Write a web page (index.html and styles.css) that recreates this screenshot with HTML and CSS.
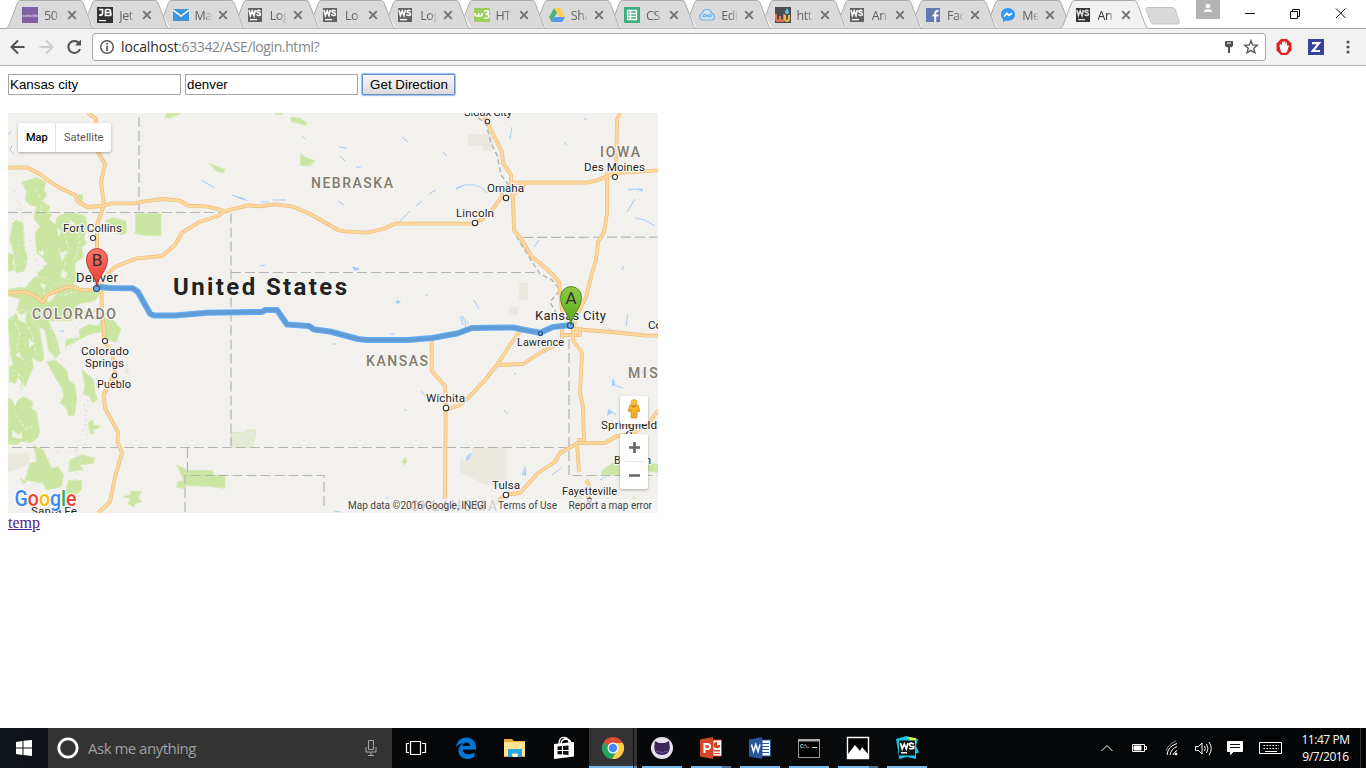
FILE: index.html
```html
<!DOCTYPE html>
<html lang="en">
<head>
<meta charset="utf-8">
<title>Directions</title>
<link rel="stylesheet" href="styles.css">
</head>
<body>
<svg class="defs" width="0" height="0" aria-hidden="true">
  <symbol id="tab" viewBox="0 0 90 29"><path d="M0 28.5C2 28 2.600 26 3.500 24L11 4C12 1.500 12.500.5 15 .5H73.500C76 .5 76.500 1.500 77.500 4L85 24C86 26.500 86.500 28 88.500 28.500"/></symbol>
  <symbol id="x" viewBox="0 0 10 10"><path d="M1.200 1.200L8.800 8.800M8.800 1.200L1.200 8.800" stroke="#737373" stroke-width="1.900"/></symbol>
  <symbol id="ws" viewBox="0 0 16 16"><path fill="#626262" d="M0 1h14v14H0z"/><path fill="none" stroke="#fff" stroke-width="1.600" d="M1 3l1.400 5.500L4.200 4l1.800 4.500L7.300 3M12.600 4.300C11.300 2.900 8.800 3 9 4.700c.2 1.500 3.500.8 3.500 2.500 0 1.700-2.800 1.600-4 .3"/><path fill="#fff" d="M2 12h7v1.300H2z"/></symbol>
</svg>

<header class="browser">
  <div class="tabstrip">
    <div class="tab"><svg class="shape"><use href="#tab"/></svg><svg class="fav" viewBox="0 0 16 16"><path fill="#7f60a5" d="M0 0h16v16H0z"/><text x="0.500" y="9.500" class="tiny" textLength="15">colorlib</text></svg><span>50</span><svg class="close"><use href="#x"/></svg></div>
    <div class="tab"><svg class="shape"><use href="#tab"/></svg><svg class="fav" viewBox="0 0 16 16"><path fill="#333" d="M0 0h16v16H0z"/><path fill="none" stroke="#fff" stroke-width="1.700" d="M2 2.500h3.500v4Q5.500 8.500 2 8M8.500 2.500v6H12q2 0 2-1.500t-2-1.500H8.500M8.500 2.500H12q1.500 0 1.500 1.500T12 5.500"/><path fill="#fff" d="M2 13h7v1.200H2z"/></svg><span>Jet</span><svg class="close"><use href="#x"/></svg></div>
    <div class="tab"><svg class="shape"><use href="#tab"/></svg><svg class="fav" viewBox="0 0 16 16"><path fill="#3d94d9" d="M0 2h16v12H0z"/><path d="M0 3l8 6 8-6" fill="none" stroke="#fff" stroke-width="1.500"/></svg><span>Ma</span><svg class="close"><use href="#x"/></svg></div>
    <div class="tab"><svg class="shape"><use href="#tab"/></svg><svg class="fav"><use href="#ws"/></svg><span>Log</span><svg class="close"><use href="#x"/></svg></div>
    <div class="tab"><svg class="shape"><use href="#tab"/></svg><svg class="fav"><use href="#ws"/></svg><span>Lo</span><svg class="close"><use href="#x"/></svg></div>
    <div class="tab"><svg class="shape"><use href="#tab"/></svg><svg class="fav"><use href="#ws"/></svg><span>Log</span><svg class="close"><use href="#x"/></svg></div>
    <div class="tab"><svg class="shape"><use href="#tab"/></svg><svg class="fav" viewBox="0 0 16 16"><rect width="16" height="14" y="1" rx="1" fill="#9dce5c"/><path d="M1 6v1.500Q1 9 2.800 9T4.600 7.500V6v1.500Q4.600 9 6.400 9T8.200 7.500V6M10 4q4.500-1 4.500 1t-3 2q3.500 0 3.500 2.300T10 11" fill="none" stroke="#fff" stroke-width="1.500"/></svg><span>HT</span><svg class="close"><use href="#x"/></svg></div>
    <div class="tab"><svg class="shape"><use href="#tab"/></svg><svg class="fav" viewBox="0 0 16 16"><path fill="#48b281" d="M5.300 1L0 10l2.700 5L8 5.700z"/><path fill="#ffd04b" d="M5.300 1H11l5 9h-5.400z"/><path fill="#5a95f2" d="M5.300 10H16l-2.800 5H2.600z"/></svg><span>Sha</span><svg class="close"><use href="#x"/></svg></div>
    <div class="tab"><svg class="shape"><use href="#tab"/></svg><svg class="fav" viewBox="0 0 16 16"><rect width="16" height="16" rx="1" fill="#39ae78"/><path fill="none" stroke="#fff" stroke-width="1.300" d="M3.500 3.500h9v9h-9zM3.500 6.500h9M3.500 9.500h9M6.500 3.500v9"/></svg><span>CS</span><svg class="close"><use href="#x"/></svg></div>
    <div class="tab"><svg class="shape"><use href="#tab"/></svg><svg class="fav" viewBox="0 0 16 16"><path d="M3 13Q.7 12 .7 9.500T3.200 6.500Q4 2.500 8 2.500T12.500 6Q15.300 7 15.300 10T12.500 13z" fill="#d5e5f3" stroke="#6bb1ee" stroke-width="1.200"/><path d="M8 9q-3-3-4-.5T8 9q3-3 4-.5T8 9" fill="none" stroke="#6bb1ee" stroke-width="1.200"/></svg><span>Edi</span><svg class="close"><use href="#x"/></svg></div>
    <div class="tab"><svg class="shape"><use href="#tab"/></svg><svg class="fav" viewBox="0 0 16 16"><path fill="#4a4d50" d="M0 0h16v16H0z"/><path d="M1 7v4q0 3 2 3t2-3V9v2q0 3 2 3t2-3V7" fill="none" stroke="#ee7550" stroke-width="2"/><path d="M10 8v3q0 3 2 3t2-3V8" fill="none" stroke="#f2bc48" stroke-width="2"/><path fill="#67bde0" d="M12 1q4 6 0 6T12 1z"/></svg><span>htt</span><svg class="close"><use href="#x"/></svg></div>
    <div class="tab"><svg class="shape"><use href="#tab"/></svg><svg class="fav"><use href="#ws"/></svg><span>An</span><svg class="close"><use href="#x"/></svg></div>
    <div class="tab"><svg class="shape"><use href="#tab"/></svg><svg class="fav" viewBox="0 0 16 16"><path fill="#6479b2" d="M1 1h14v14H1z"/><path d="M13.500 4h-1q-2.300 0-2.300 2.500V15M7.500 8.500h6" fill="none" stroke="#fff" stroke-width="2"/></svg><span>Fac</span><svg class="close"><use href="#x"/></svg></div>
    <div class="tab"><svg class="shape"><use href="#tab"/></svg><svg class="fav" viewBox="0 0 16 16"><path fill="#3298f6" d="M8 1C3.500 1 1 4 1 7.500c0 2 .8 3.500 2 4.500v3l3-1.500C11 14.500 15 12 15 7.500 15 4 12 1 8 1z"/><path d="M4 9.500L7 6.300l2 2 3-2" fill="none" stroke="#fff" stroke-width="1.800"/></svg><span>Me</span><svg class="close"><use href="#x"/></svg></div>
    <div class="tab active"><svg class="shape"><use href="#tab"/></svg><svg class="fav"><use href="#ws"/></svg><span>An</span><svg class="close"><use href="#x"/></svg></div>
    <svg class="newtab" width="36" height="18" viewBox="0 0 36 18"><path d="M2 .5h25.500q2 0 2.700 2l4 12q.8 2-1.200 2.500H8.500q-2 0-2.700-2L1 2.500Q.5.500 2 .5z"/></svg>
    <div class="profile"><svg width="24" height="19" viewBox="0 0 24 19"><circle cx="12" cy="6" r="2.300" fill="#fff"/><path fill="#fff" d="M8 12q0-3 4-3t4 3z"/></svg></div>
    <svg class="winctl" width="120" height="28" viewBox="0 0 120 28"><path d="M1 13.500h10M46.500 11.500h7v7h-7zM48.500 11.500v-2h7v7h-2M92 8.500l9.500 9.500M101.500 8.500L92 18"/></svg>
  </div>
  <div class="toolbar">
    <svg class="nav" width="84" height="36" viewBox="0 0 84 36"><path d="M24.500 18H12M18 11.500L11.500 18l6.500 6.500" stroke="#505050"/><path d="M39.500 18H52M46 11.500l6.500 6.500-6.500 6.500" stroke="#ccc"/><path d="M79.300 14.500A6 6 0 1 0 80 20" stroke="#505050"/><path d="M81 10.500v6h-6z" fill="#505050"/></svg>
    <div class="omnibox">
      <svg width="16" height="16" viewBox="0 0 16 16"><circle cx="8" cy="8" r="6.300" fill="none" stroke="#555" stroke-width="1.400"/><path fill="#555" d="M7.200 4h1.700v1.700H7.200zM7.200 7h1.700v5H7.200z"/></svg>
      <span class="url"><b>localhost</b>:63342/ASE/login.html?</span>
      <svg class="key" width="10" height="14" viewBox="0 0 10 14"><path fill="#555" d="M1 1h8v5L7.500 7.200H6V13H4V7.200H2.500L1 6z"/><path fill="#fff" d="M3 2.500h4v1H3z"/></svg>
      <svg class="star" width="16" height="16" viewBox="0 0 16 16"><path fill="none" stroke="#555" stroke-width="1.400" d="M8 1.700l1.700 4.200 4.600.4-3.500 3 1.100 4.500L8 11.400l-3.900 2.400 1.100-4.500-3.500-3 4.600-.4z"/></svg>
    </div>
    <svg class="hand" width="16" height="16" viewBox="0 0 16 16"><path fill="#e22222" d="M5 0h6l4.500 4.500v7L11 16H5L.5 11.500v-7z"/><path fill="#fff" d="M3.500 6.500L5 4.500l1 2.500V2.700h1.300V6.500l.5-4.300h1.300v4.300l.6-3.300h1.200v4.300l1-1.500 1.100.7-2 6q-.7 1.300-3.200 1.300-2.800 0-3.300-2.500z"/></svg>
    <svg class="zed" width="16" height="16" viewBox="0 0 16 16"><path fill="#38419b" d="M0 0h16v16H0z"/><path d="M4 4.200h7L4.800 12H12" fill="none" stroke="#fff" stroke-width="2.200"/></svg>
    <svg class="dots" width="4" height="16" viewBox="0 0 4 16"><circle cx="2" cy="3" r="1.600"/><circle cx="2" cy="8" r="1.600"/><circle cx="2" cy="13" r="1.600"/></svg>
  </div>
</header>

<main class="page">
  <form class="route">
    <input class="field" type="text" value="Kansas city"><input class="field" type="text" value="denver"><button class="go" type="button">Get Direction</button>
  </form>
  <section class="map">
    <svg class="canvas" width="650" height="400" viewBox="8 113 650 400">
      <path fill="#f2f1ee" d="M8 113h650v400H8z"/>
      <!-- Parks and forest, in tile units of a third of a pixel -->
      <g class="green" transform="translate(0 110) scale(.33333)">
        <path d="M65 215L85 210 110 203 125 210 138 215 132 240 140 255 128 275 150 290 145 305 155 315 147 325 165 345 172 320 200 308 225 308 258 320 260 350 252 385 260 400 245 410 250 440 225 460 225 485 235 500 220 520 235 530 200 545 150 540 145 520 120 510 112 490 130 475 142 460 125 440 110 430 105 370 120 350 102 325 110 290 90 285 75 270 80 245z"/>
        <path d="M38 340l10-10 22 10 2 70 10 35-8 38-27 5-6-60-12-40zM24 430l20 5-6 25 6 20-20 5zM75 535l30-35 35 5 20 20 30-10 60 25 40-10 10 20-15 22-50 10-20 50H95l-10-25-35-5 10-35-35-10v-20l40-5zM225 265l5-10 17-2 2 27-20-5zM315 332l25-9 38 10 2 35-15 7-28-12zM407 310h76v67h-40l-38-6zM500 10h45l-30 12-20 3zM627 160l48 18-3 10-20-2z"/>
      </g>
      <g class="green" transform="translate(0 310) scale(.33333)">
        <path d="M24 30l35-30 30 0 5 25 20 15 8 35 10 70-8 10-16-4-13-10 5 30-25 60-15 15 5-30-12-15-7 20-18-5v-46l12-5-8-30-4-50zM24 265l25 10 20-15 30 15-5 20 15 10 5 28 5 30-5 20-20 15-30-5-10 10H24zM90 25l45-15 20 45 15 30 10 45-12 15-23-25-10-60-30-15zM140 155l25-5 35 30 5 30 20 15 5 45-7 45-17 3-5-20-20-20 10-20-5-25-20-30zM195 110l5-22 40-5-2-25 30-15 30 5 10-45h-35l-40 10-25-10h70l25-10v30l35 5 25 30-15 40-30-12-15-20-30 5z"/>
        <path d="M245 178l35 30 5 40 8 20-15 10-10-20-18-5 5-25zM265 340l12-12 5 18h20l-8 10-15 2 3 15-12-5zM100 405l30 15 25 55 20-5 15 25-5 35-45 10-10-20-55-10 15-50 20-5zM210 450l35-15 40 10-5 15-40 5 10 15-45 5zM205 510l40 2v25l-25 25-25-10zM60 505l20 10-10 8zM370 560l20-5 3-12 32 3-10 15 10 15-20 5-2 10-18-8 4-18zM530 465l28 12v4h80v14h37v40l-50-6-65-3-5 10-25-4 3-15 18-5-10-25z"/>
      </g>
      <g class="green" transform="translate(230 110) scale(.33333)"><path d="M183 22l25 2 23 15-3 8-20-7-25-5zM211 132l12 8 32 12-15 15h-28zM135 9h25l-5 5h-20z"/><path fill="#e4ead6" d="M3 967h42l3-7h28v15l-8 37H3z"/></g>
      <g class="green" transform="translate(450 310) scale(.33333)"><path d="M455 482l35-25 134 5v25l-50-7-60 15h-60z"/><path fill="#e3e9d4" d="M385 548l10 12-8 20-15-20zM550 560l30 20-35 10z"/></g>
      <g class="green" transform="translate(230 310) scale(.33333)"><path d="M526 440l6 15-10 10-6-10z"/></g>
      <g fill="#eae8df"><path d="M468 134h25v17h-10v-5h-15zM519 283h9v17h-9zM509 307h9v8h-9zM473 447h34v42l-23-5-24-12v-13h10zM8 454l20-2 2 12-22 8zM124 369h5v5h-3z"/></g>
      <g fill="#f5f5f1" opacity=".85"><path d="M22 275l8 6-7 4zM15 310l7 5 5-4-2 12-6-3zM58 245l3 8 6-3-5 12zM70 220l5 3-4 9zM15 355l5-3 2 7zM12 430l7 5 3-4v8l-10-2zM43 292l13 3-7 8zM22 384l4 4-6 4zM62 270l6 3-3 6-4-2zM40 283l6 2-2 5zM57 228l4 3-2 6zM12 398l5 3-2 6zM29 338l5 6-5 4zM38 252l6-2-1 6z"/></g>
      <path class="ridge" d="M12 318l8 14-3 16 8 16M26 322l6 12 5 24M14 370l10 10-2 14M50 290l12 6 14-5M62 225l6 22-4 22 6 16M76 225l4 16-5 18M16 415l10 14 10-4M20 202l3 24 3 24M36 190l6 12-2 14"/>
      <path class="ridge pale" d="M50 328l8 22-5 8 14 3M88 400l-3 25-5 14-10 30M84 404l3 30-10 40M76 450l5 18-9 20 10 11M14 190l5 15-8 20 9 15-5 20 7 12M57 355l20-14M30 240l8 24 14 6M16 255l14 10M40 465l20-15 14 4M62 312l16 18-8 20"/>
      <!-- Rivers and lakes -->
      <g class="water"><path d="M201 180l14 8M232 195l8 3M302 136l3 3M339 147l8 1M340 156l5 5M356 167h5M338 201l6 4M402 137l6 5M443 152l4 4M400 221l10-10M416 206l6-5M429 194l7-4M456 189l5-2M261 202h8M273 200h13M12 145l-2 5 4 4M8 135l3-4M95 119l3 4M512 127l-2 12M564 142l3 3M584 119h3M456 188q20-9 31 5M635 199l-8 13M628 190l7-1 6 1M635 218l10 2 10 6M539 240l-5 7M624 266l-2 4M474 300l5 9M462 316l7 8M628 314l-2 12M609 328l2 3M641 370l6 10M614 385l9 3M608 409l8 6M630 364l2 14M460 317l3 8M390 334h5M332 344h4M504 410l4 4M514 373l2 1M421 391l4 5M404 410h3M466 457l5-4-3 7M525 467l-3 8M552 475l9-7M600 480l6-3M386 497l3 4M334 511l6 1M60 331h4M260 266l5-1M353 267l6 3M425 295h3M461 316l4 6 1 8"/><path class="lake" d="M232 195l12 3 4 3-5-1zM352 267l8 1-5 3zM395 302l3-2 3 2-3 2zM466 458l6-4-5 7zM608 410l5 2-6 4zM523 475l3-8v9zM638 188l5 1-1 3zM612 380l2-1 1 6-3 1z"/></g>
      <!-- State borders -->
      <g class="border"><path d="M139 117v95M8 212.500h223V446M231 272.500h307M12 447.500h558M187.500 448v28M185 512v-36.500h139V510M569 339v136.500h88M523 237.500l135-.5"/><path class="river" d="M478 118l8 5 5 20 6 12 4 20 7 9 4 14 1 25 5 16 13 21 9 14 12 6 8 10-10 12 8 14"/></g>
      <!-- Highways -->
      <defs><g id="roads">
        <path d="M8 167.700L26.700 167.300 40 174.300 50 181.700 60 188 75 195 78 201.700 87 207 103 206 112 203.300H135L142 201.700 163 199 180 200.700 188 205.700 208 206.700 225 211 240 207.300 247 205.300 260 206.300 275 204.300 293 206.700 310 214 338 230 345 231.300 367 232.700 383 229 395 223.700H472L483 219 492 210 501 198 503 190"/>
        <path d="M88 113L96 119 98 152 105 164 101 182 104 205 97 225V285L101.500 292 102 315 104.500 330 103.500 340 112 353 115 373 103.500 395 105 408 118 432 117.500 442 122 453 115 477 110 502 98 513"/>
        <path d="M225 211L218 216 200 221.700 182 232.700 175 245 162 256 137 258.300 115 266.700 105 277 100 288 88 290H82L68 286.700 55 291.700 47 295 43 302 37 297 25 291.700 8 293"/>
        <path d="M482 113L487 122 494 136 502 152 503 163 511 175V182L513 198 514 230 523 242 532 257 540 263 553 275 559 282 562 310 571 325M511 182.500L587 182.700 597 180.300 610 175 623 172.700 658 170.300M510 198L525 184M620 113L617 120 616 173H607V213L604 232 598 242 596 260 592 273 586 297 578 313 574 325"/>
        <path d="M573 325V340L582 353 580 393 583 407 584 440 577 440M577 443L579 472M431.700 339V371L445 386 445.700 407 445 500M446 410L460 405 468 398 485 380 497 365 508 348 520 331M497 365L523 364 540 353 562 341 562 328M562 335H580V327M573 329L617 332.500 647 335.700H658M490 507L506 494.500 520 493 538 473 555 462 560 453 578 443H605L617 436 630 435 650 422 658 410M586 480L589 485 588 510"/>
      </g>
      <path id="drive" d="M97 286.700L110 288 133 288.300 138 292 150 313.500 154 315.500H175L207 312.700 262 312 265 310H277L287 324.500 309 326 314 329.500 330 331.500 358 339 367 340H408L432 338 457 333.500 472 328 513 327.500 525 330 540 332.700 553 327 571 325"/></defs>
      <use href="#roads" class="casing"/><use href="#roads" class="road"/>
      <use href="#drive" class="drive-edge"/><use href="#drive" class="drive-mid"/>
      <g class="stop"><circle cx="487.500" cy="121.500" r="2.200"/><circle cx="506" cy="198" r="2.700"/><circle cx="475" cy="223" r="2.700"/><circle cx="615" cy="177" r="2.500"/><circle cx="93" cy="238" r="2.500"/><circle cx="105" cy="341" r="2.500"/><circle cx="114.500" cy="375.500" r="2.200"/><circle cx="446" cy="408" r="2.800"/><circle cx="506" cy="495" r="2.700"/><circle cx="589.500" cy="500" r="2"/><circle cx="629" cy="434" r="2.500"/></g>
      <g class="stop blue"><circle cx="96.500" cy="288.500" r="3"/><circle cx="570.500" cy="325.500" r="3"/><circle cx="540.500" cy="333.500" r="2"/></g>
      <g class="state"><text x="311" y="188" textLength="82">NEBRASKA</text><text x="600" y="157" textLength="40">IOWA</text><text x="32" y="319" textLength="84">COLORADO</text><text x="366" y="366" textLength="62">KANSAS</text><text x="628" y="378" textLength="82">MISSOURI</text><text x="410" y="511" textLength="87">OKLAHOMA</text></g>
      <text class="country" x="173" y="294.500" textLength="174">United States</text>
      <g class="city"><text x="464" y="116" textLength="48">Sioux City</text><text x="487" y="192" textLength="37">Omaha</text><text x="456" y="217" textLength="38">Lincoln</text><text x="584" y="171" textLength="61">Des Moines</text><text x="63" y="232" textLength="59">Fort Collins</text><text class="big" x="76" y="281.500" textLength="42">Denver</text><text x="81" y="355" textLength="48">Colorado</text><text x="85" y="367" textLength="39">Springs</text><text class="small" x="97" y="388" textLength="34">Pueblo</text><text x="426" y="402" textLength="39">Wichita</text><text class="big" x="535" y="320" textLength="71">Kansas City</text><text class="small" x="517" y="346" textLength="47">Lawrence</text><text x="648" y="329">Columbia</text><text x="601" y="429" textLength="56">Springfield</text><text class="small" x="614" y="464" textLength="37">Branson</text><text x="492" y="489" textLength="28">Tulsa</text><text class="small" x="562" y="495" textLength="55">Fayetteville</text><text x="31" y="515" textLength="46">Santa Fe</text></g>
      <defs>
        <linearGradient id="red" x1="0" y1="0" x2="0" y2="1"><stop stop-color="#fc7467"/><stop offset="1" stop-color="#e83b32"/></linearGradient>
        <linearGradient id="grn" x1="0" y1="0" x2="0" y2="1"><stop stop-color="#8bcb42"/><stop offset="1" stop-color="#5ca623"/></linearGradient>
      </defs>
      <path fill="url(#red)" stroke="#a52a25" stroke-width=".8" d="M97 287C96 276 86.500 271 86.500 259a10.500 10.500 0 0 1 21 0C107.500 271 98 276 97 287z"/>
      <path fill="url(#grn)" stroke="#43791d" stroke-width=".8" d="M571 325C570 314 560.500 309 560.500 297a10.500 10.500 0 0 1 21 0C581.500 309 572 314 571 325z"/>
      <g class="pin"><text x="97" y="265.500">B</text><text x="571" y="304">A</text></g>
      <text class="logo" x="14.500" y="505.500" textLength="62" lengthAdjust="spacingAndGlyphs"><tspan fill="#4285f4">G</tspan><tspan fill="#ea4335">o</tspan><tspan fill="#fbbc05">o</tspan><tspan fill="#4285f4">g</tspan><tspan fill="#34a853">l</tspan><tspan fill="#ea4335">e</tspan></text>
    </svg>
    <div class="maptype"><b>Map</b><span>Satellite</span></div>
    <div class="pegman"><svg width="14" height="20" viewBox="0 0 14 20"><path fill="#f7b62b" stroke="#c9861b" stroke-width=".7" d="M3 6h8l2 6-1.700 1L10 10.500V19H7.500v-5h-1v5H4v-8.500L2.700 13 1 12z"/><circle cx="7" cy="3.500" r="3" fill="#fbc23a" stroke="#d2901c" stroke-width=".7"/><path fill="#e0761c" d="M4 6.500h6L7 9z"/></svg></div>
    <div class="zoom"><svg width="28" height="55" viewBox="0 0 28 55"><path fill="none" stroke="#666" stroke-width="2.600" d="M9 13.500h11M14.500 8v11M9 41.500h11"/><path stroke="#e6e6e6" d="M5 27.500h18"/></svg></div>
    <div class="credits"><span>Map data ©2016 Google, INEGI</span><span>Terms of Use</span><span>Report a map error</span></div>
  </section>
  <a class="temp" href="#">temp</a>
</main>

<footer class="taskbar">
  <svg class="start" width="48" height="40" viewBox="0 0 48 40"><path fill="#fff" d="M16 14l6.500-1v6.500H16zM23.500 12.800L32 12v7.500h-8.500zM16 20.500h6.500V27L16 26zM23.500 20.500H32V28l-8.500-1z"/></svg>
  <div class="search"><svg width="24" height="24" viewBox="0 0 24 24"><circle cx="12" cy="12" r="9.200" fill="none" stroke="#fff" stroke-width="2.800"/></svg><span>Ask me anything</span><svg class="mic" width="14" height="18" viewBox="0 0 14 18"><path fill="none" stroke="#a5a5a5" d="M4.500 1.500h5v9h-5zM2 8v5h10V8M7 13v3.500M4 16.500h6"/></svg></div>
  <div class="apps">
    <div class="app"><svg viewBox="0 0 24 24"><path fill="none" stroke="#fff" stroke-width="1.200" d="M6.500 5.500h10v13h-10zM5 7.500H2.500v9H5M18 7.500h3.500v9H18"/></svg></div>
    <div class="app"><svg viewBox="0 0 24 24"><path fill="#0078d7" d="M2 11C3 5 7 1.500 12 1.500c7 0 10.500 5 10 12H8.500c.3 5 7.500 6 12 3v4.500c-7 4-16 1.500-16-6 0-4 2.500-6.500 5-8C6 7.500 3.500 9 2 11zM8.500 10H16c0-5-7-4.500-7.500 0z"/></svg></div>
    <div class="app"><svg viewBox="0 0 24 24"><path fill="#e5ad32" d="M1 3h8l2 2h11v16H1z"/><path fill="#ffe393" d="M1 6h21v14H1z"/><path fill="#26a9e1" d="M5 21v-8h14v8h-4v-3.500H9V21z"/><path fill="#fff" d="M10 18h4v3h-4z"/></svg></div>
    <div class="app"><svg viewBox="0 0 24 24"><path fill="#fff" d="M2 8l20-2v14.500L2 23z"/><path d="M7 8Q7 1 12 1.500T17 7M9 8q0-5 6-5 4 1 4 5" fill="none" stroke="#fff" stroke-width="1.300"/><path fill="#111" d="M5.500 10.500l4.500-.5v4H5.500zM11 10l5.500-.5V14H11zM5.500 15H10v3.500l-4.500-.3zM11 15h5.500v4L11 18.500z"/></svg></div>
    <div class="app run on"><svg viewBox="0 0 24 24"><circle cx="12" cy="12" r="11" fill="#dd4b39"/><path fill="#1da462" d="M12 12L2.500 6.500A11 11 0 0 0 11 23l5-8z"/><path fill="#ffcd46" d="M12 7h9.800A11 11 0 0 1 11 23l5.500-9z"/><circle cx="12" cy="12" r="5.500" fill="#fff"/><circle cx="12" cy="12" r="4.200" fill="#4688f1"/></svg></div>
    <div class="app run"><svg viewBox="0 0 24 24"><circle cx="12" cy="12" r="11" fill="#e6e2f2"/><path fill="#3e255c" d="M5 5l4 2h6l4-2q.5 4 .8 6.500Q19.500 19 12 19T4.200 11.500Q4.500 9 5 5z"/><path d="M6 15q6 3 12 0" fill="none" stroke="#745b90"/></svg></div>
    <div class="app run stack"><svg viewBox="0 0 24 24"><path fill="#d24726" d="M1 3.500L14 1v22L1 20.500z"/><path fill="#fff" stroke="#d24726" d="M14 4h8.500v16H14z"/><path fill="#d24726" d="M15 14h6v1.500h-6zM15 17h6v1h-6z"/><circle cx="18" cy="9" r="3.200" fill="#d24726"/><path fill="#fff" d="M18 9V5.500Q21.500 6 21.500 9z"/><path d="M5.500 17V8h3q2.500 0 2.500 2.500T8.500 13h-3" fill="none" stroke="#fff" stroke-width="2"/></svg></div>
    <div class="app run"><svg viewBox="0 0 24 24"><path fill="#2b579a" d="M1 3.500L14 1v22L1 20.500z"/><path fill="#fff" stroke="#2b579a" d="M14 4h8.500v16H14z"/><path stroke="#2b579a" d="M14 7.500h7M14 10.500h7M14 13.500h7M14 16.500h7"/><path d="M3.500 8.500l2 7 2.300-7 2.200 7 2-7" fill="none" stroke="#fff" stroke-width="1.500"/></svg></div>
    <div class="app run"><svg viewBox="0 0 24 24"><path fill="#000" stroke="#999" d="M1.500 3.500h21v18h-21z"/><path fill="#aaa" d="M1 3h22v2.500H1z"/><text class="cmd" x="3" y="12" textLength="10">C:\.</text><path stroke="#ddd" d="M15 11.500h5"/></svg></div>
    <div class="app run stack"><svg viewBox="0 0 24 24"><path fill="#000" stroke="#fff" stroke-width="1.400" d="M1.500 1.500h21v21h-21z"/><path fill="#fff" d="M2 18L9 9l5 6 2-4 6 7v4H2z"/></svg></div>
    <div class="app run"><svg viewBox="0 0 24 24"><path fill="#17c5e4" d="M1 3l10-3 12 3-2 7 3 6-3 2v5l-9-2-8 2-1-9z"/><path fill="#dcf646" d="M12 1l9 1-1 8-4-5z"/><path fill="#111" d="M4 4.500h16v15H4z"/><path d="M5.500 7l1.700 6L9.300 8l2.100 5L13 7M18.800 8q-4.300-2-4.300.5t4.300 2q1 3-4.800 2" fill="none" stroke="#fff" stroke-width="1.700"/><path fill="#fff" d="M6 16h6v1.500H6z"/></svg></div>
  </div>
  <div class="tray">
    <svg width="200" height="40" viewBox="1090 728 200 40" fill="none" stroke="#fff"><path d="M1101.500 751l5.500-5.500 5.500 5.500M1132.500 744.500h12v7h-12zM1145 746.500h1.500v3h-1.500"/><path fill="#fff" d="M1134 746h7v4h-7z"/><path d="M1167 755q1-9 10-11.500M1170 755q1-6 7-8.500M1173 755q1-3 4-4.500" /><path d="M1166 751q2-7 10-10" stroke="#888"/><circle cx="1176" cy="754" r="1" fill="#fff"/><path d="M1195.500 746.500h3l3.500-3.500v11l-3.500-3.500h-3zM1204.500 746q1.500 2.500 0 5M1206.500 744q3 4.500 0 9M1209 742q4.500 6.500 0 13"/><path fill="#fff" d="M1227.500 741.500h15v10h-9l-3 3v-3h-3z"/><path d="M1230 744.500h10M1230 747.500h10" stroke="#111"/><path d="M1259.500 742.500h22v11h-22zM1262 745.500h17M1262 748.500h17" /><path d="M1262 745.500h17M1262 748.500h17" stroke-dasharray="1.500 1.500" stroke="#111"/><path d="M1265 751.500h12"/></svg>
    <div class="clock"><span>11:47 PM</span><span>9/7/2016</span></div>
  </div>
</footer>
</body>
</html>
```
FILE: styles.css
```css
* { box-sizing: border-box; }
body { margin: 0; width: 1366px; height: 768px; overflow: hidden; display: flex; flex-direction: column; background: #fff; font-family: "Open Sans", "Noto Sans", sans-serif; }
svg { display: block; flex: none; }
.defs { position: absolute; }

.tabstrip { display: flex; height: 29px; padding-left: 6px; background: linear-gradient(#fff 28px, #a9a9a9 28px); }
.tab { position: relative; z-index: 1; display: flex; flex: none; align-items: center; width: 75.250px; height: 29px; padding: 1px 0 0 16px; font-size: 12.500px; color: #626262; }
.tab:nth-child(n+2) .shape { clip-path: polygon(9px 0, 100% 0, 100% 100%, 14px 100%, 6px 14px); }
.tab .shape { position: absolute; left: 0; top: 0; width: 90px; height: 29px; fill: #dadada; stroke: #acacac; }
.fav { position: relative; width: 16px; height: 16px; }
.tab span { position: relative; width: 17px; margin: 0 2px 0 6px; overflow: hidden; white-space: nowrap; letter-spacing: -.4px; -webkit-mask-image: linear-gradient(90deg, #000 55%, transparent); }
.close { position: relative; width: 10px; height: 10px; margin-left: 4px; }
.tab.active { z-index: 3; color: #333; }
.tab.active .shape { clip-path: none; fill: #f2f2f2; }
.tab.active .fav { filter: brightness(.75) contrast(1.4); }
.tiny { font: 4px "Liberation Sans", sans-serif; fill: #fff; }
.newtab { margin: 7px 0 0 10px; fill: #d9d9d9; stroke: #c3c3c3; }
.profile { width: 24px; height: 19px; margin-left: 15px; background: #b3b3b3; }
.winctl { margin-left: 24px; fill: none; stroke: #111; }

.toolbar { display: flex; align-items: center; height: 37px; background: #f2f2f2; border-bottom: 1px solid #b5b5b5; }
.nav { margin-right: 8px; fill: none; stroke-width: 2; }
.omnibox { display: flex; align-items: center; width: 1174px; height: 28px; padding-left: 6px; background: #fff; border: 1px solid #a8a8a8; border-radius: 3px; }
.url { margin-left: 6px; font-size: 14px; line-height: 24px; letter-spacing: -.4px; color: #858585; white-space: nowrap; }
.url b { font-weight: 400; letter-spacing: -.15px; color: #2c2c2c; }
.key { margin-left: auto; }
.star { margin: 0 6px 0 9px; }
.hand { margin-left: 10px; }
.zed { margin-left: 16px; }
.dots { margin-left: 22px; fill: #555; }

.page { flex: 1; padding: 8px 8px 0; }
.route { display: flex; gap: 4px; height: 39px; }
.field { width: 173px; height: 21px; padding: 0 1px 1px; border: 1px solid #a6a6a6; background: #fff; color: #000; font: 13.330px "Liberation Sans", Arial, sans-serif; outline: 0; }
.go { width: 93px; height: 21px; padding: 0 0 1px 1px; border: 1px solid #6a8ccb; border-radius: 1px; box-shadow: 0 0 1px 1px #9dbcf0; background: linear-gradient(#f6f6f6, #dcdcdc); color: #000; font: 13.330px "Liberation Sans", Arial, sans-serif; }
.map { position: relative; width: 650px; height: 400px; overflow: hidden; font-family: Roboto, sans-serif; }
.green { fill: #cbe6a3; stroke: #d8eab8; stroke-width: 3; }
.ridge { fill: none; stroke: #dfeecb; stroke-width: 1.500; stroke-dasharray: 2 3 4 2; }
.ridge.pale { stroke: #e2e1de; stroke-dasharray: 2 3 1 4; }
.water { fill: none; stroke: #a6cdfb; stroke-width: 1; }
.lake { fill: #a6cdfb; stroke: none; }
.border { fill: none; stroke: #b5b5b5; stroke-width: 1.200; stroke-dasharray: 10 4; }
.river { stroke-dasharray: 5 3; stroke-width: 1.500; }
.casing, .road { fill: none; stroke-linejoin: round; }
.casing { stroke: #efbd7c; stroke-width: 3.800; }
.road { stroke: #ffd79c; stroke-width: 2.400; }
.drive-edge, .drive-mid { fill: none; stroke-linejoin: round; }
.drive-edge { stroke: #63abf2; stroke-width: 6; }
.drive-mid { stroke: #629bd3; stroke-width: 3.500; }
.stop circle { fill: #fff; stroke: #333; stroke-width: 1.100; }
.stop.blue circle { fill: #63abf2; stroke: #1d4f80; }
.canvas text { paint-order: stroke; stroke: #f6f5f2; stroke-width: 2.500px; stroke-linejoin: round; }
.state { font-size: 14px; font-weight: 500; fill: #817b6e; }
.country { font-size: 24px; font-weight: 700; fill: #222; }
.city { font-size: 11.700px; fill: #252525; }
.small { font-size: 11px; }
.big { font-size: 13px; }
.canvas .pin text { font-size: 17px; text-anchor: middle; fill: #332f2c; stroke: none; }
.canvas .logo { font: 500 22px Roboto, sans-serif; stroke: #fff; stroke-width: 2px; }
.maptype { position: absolute; left: 10px; top: 10px; display: flex; height: 29px; font-size: 11px; line-height: 29px; background: #fff; border-radius: 2px; box-shadow: 0 1px 3px rgba(0,0,0,.3); color: #565656; }
.maptype b { width: 38px; padding-left: 8px; font-weight: 500; color: #000; border-right: 1px solid #e2e2e2; }
.maptype span { width: 55px; padding-left: 8px; }
.pegman, .zoom { position: absolute; left: 612px; width: 28px; background: #fff; border-radius: 2px; box-shadow: 0 1px 3px rgba(0,0,0,.3); }
.pegman { top: 283px; height: 28px; padding: 3px 7px; }
.zoom { top: 321px; height: 55px; }
.credits { position: absolute; right: 0; bottom: 0; display: flex; justify-content: space-between; width: 316px; height: 14px; padding: 0 6px; font-size: 10px; line-height: 14px; color: #444; background: rgba(245,245,245,.7); white-space: nowrap; }
.temp { display: block; width: max-content; padding-top: 1px; font: 16px/18px "Liberation Serif", "Times New Roman", serif; color: #551a8b; }

.taskbar { display: flex; height: 40px; background: linear-gradient(90deg, #10151a, #050607 25%, #08090a 60%, #030405); color: #fff; }
.search { display: flex; align-items: center; width: 344px; padding-left: 8px; background: #333; }
.search span { margin-left: 8px; font-size: 15px; letter-spacing: -.5px; color: #a0a0a0; }
.mic { margin: 0 14px 0 auto; }
.apps { display: flex; gap: 1px; padding-left: 1px; }
.app { display: flex; justify-content: center; align-items: center; width: 48px; height: 40px; }
.app:first-child svg { margin-right: 2px; }
.app svg { width: 24px; height: 24px; }
.run { background: linear-gradient(#76b9ed, #76b9ed) center bottom / 40px 2px no-repeat; }
.run.on { background: linear-gradient(90deg, #76b9ed 44px, #222 44px, #222 45px, #5689b3 45px) center bottom / 48px 2px no-repeat, linear-gradient(90deg, #333 44px, #111 44px, #111 45px, #333 45px); }
.run.stack { background-image: linear-gradient(90deg, #76b9ed 31px, #4a7599 31px); }
.cmd { font: 6px "Liberation Mono", monospace; fill: #fff; }
.tray { display: flex; margin-left: auto; }
.clock { display: flex; flex-direction: column; justify-content: center; align-items: center; width: 71px; margin-right: 5px; padding-left: 1px; border-right: 1px solid #333; font-size: 12px; line-height: 17px; letter-spacing: -.450px; }
```
